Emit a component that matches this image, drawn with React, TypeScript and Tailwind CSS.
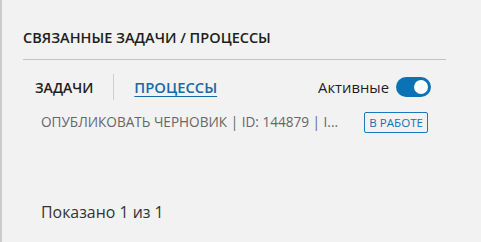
import React from "react";

export default function App() {
  return (
    <div className="w-[481px] h-[242px] bg-[#f2f2f2] border-l-2 border-[#cbcbcb] font-['Open_Sans',sans-serif] overflow-hidden">
      <div className="pl-[21px] pr-[35px] pt-[28px]">
        <h2 className="text-[14.5px] leading-[20px] font-semibold text-[#1e1e1e]">
          СВЯЗАННЫЕ ЗАДАЧИ / ПРОЦЕССЫ
        </h2>
        <div className="mt-[11px] h-px bg-[#c4c4c4]" />

        <div className="flex items-center mt-[14px] h-[26px] pl-[12px] pr-[15px]">
          <span className="text-[14px] font-semibold text-[#1e1e1e]">ЗАДАЧИ</span>
          <div className="mx-[20px] w-px h-[26px] bg-[#cfcfcf]" />
          <a className="text-[14.8px] font-semibold text-[#1769a8] underline underline-offset-[3px]">
            ПРОЦЕССЫ
          </a>
          <div className="ml-auto flex items-center gap-[7px]">
            <span className="text-[14.8px] text-[#1e1e1e]">Активные</span>
            <div className="relative w-[35px] h-[20px] rounded-full bg-[#0b72b5]">
              <div className="absolute right-[3px] top-[3px] w-[14px] h-[14px] rounded-full bg-white" />
            </div>
          </div>
        </div>

        <div className="flex items-center mt-[12px] pl-[18px] pr-[18px]">
          <span className="text-[13.6px] text-[#666] whitespace-nowrap">
            ОПУБЛИКОВАТЬ ЧЕРНОВИК | ID: 144879 | I...
          </span>
          <span className="ml-auto border border-[#1b78bd] rounded-[2px] px-[4px] h-[21px] flex items-center text-[11.6px] text-[#1b6fb0]">
            В РАБОТЕ
          </span>
        </div>

        <div className="mt-[68px] pl-[18px] text-[15.9px] text-[#333]">Показано 1 из 1</div>
      </div>
    </div>
  );
}
